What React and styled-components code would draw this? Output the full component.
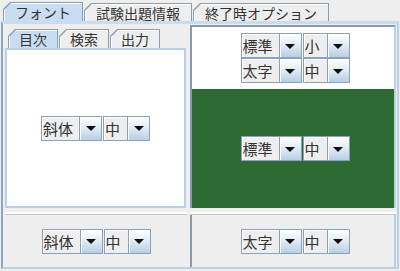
import styled, { createGlobalStyle } from "styled-components";

const GlobalStyle = createGlobalStyle`
  html, body {
    margin: 0;
    padding: 0;
    background: #eeeeee;
  }
  body {
    font-family: "Noto Sans CJK JP", "Noto Sans", sans-serif;
  }
`;

const slant = "polygon(7px 0, 100% 0, 100% 100%, 0 100%, 0 7px)";

const Tab = ({ label, selected, small }) => (
  <StyledTab $small={small} $selected={selected}>
    <StyledTabFace $small={small} $selected={selected}>{label}</StyledTabFace>
  </StyledTab>
);

const Combo = ({ value, wide }) => (
  <StyledCombo>
    <StyledField $wide={wide}>{value}</StyledField>
    <StyledArrowButton>
      <StyledArrow />
    </StyledArrowButton>
  </StyledCombo>
);

const FontPair = ({ style, size }) => (
  <StyledPair>
    <Combo value={style} wide />
    <Combo value={size} />
  </StyledPair>
);

export default function App() {
  return (
    <>
      <GlobalStyle />
      <StyledWindow>
        <StyledTabStrip>
          <Tab label="フォント" selected />
          <Tab label="試験出題情報" />
          <Tab label="終了時オプション" />
        </StyledTabStrip>
        <StyledContent>
          <StyledColumn $width={182}>
            <StyledUpper>
              <StyledInnerTabs>
                <Tab label="目次" selected small />
                <Tab label="検索" small />
                <Tab label="出力" small />
              </StyledInnerTabs>
              <StyledPage>
                <FontPair style="斜体" size="中" />
              </StyledPage>
            </StyledUpper>
            <StyledDivider />
            <StyledLower>
              <FontPair style="斜体" size="中" />
            </StyledLower>
          </StyledColumn>
          <StyledColumn $width={206}>
            <StyledFramed>
              <StyledPreview>
                <StyledStack>
                  <FontPair style="標準" size="小" />
                  <FontPair style="太字" size="中" />
                </StyledStack>
              </StyledPreview>
              <StyledGreen>
                <FontPair style="標準" size="中" />
              </StyledGreen>
            </StyledFramed>
            <StyledDivider />
            <StyledLower $framed>
              <FontPair style="太字" size="中" />
            </StyledLower>
          </StyledColumn>
        </StyledContent>
      </StyledWindow>
    </>
  );
}

const StyledWindow = styled.div`
  width: 400px;
  height: 271px;
  background: #eeeeee;
  display: flex;
  flex-direction: column;
  box-sizing: border-box;
  color: #333333;
`;

const StyledTabStrip = styled.div`
  display: flex;
  align-items: flex-end;
  height: 21px;
  padding-left: 3px;
  flex: none;
`;

const StyledTab = styled.div`
  background: #8a9cb0;
  clip-path: ${slant};
  padding: 1px 1px 0 1px;
  margin-right: 1px;
  height: ${({ $small, $selected }) => ($small ? 19 : $selected ? 19 : 18)}px;
  box-sizing: border-box;
  display: flex;
`;

const StyledTabFace = styled.div`
  clip-path: ${slant};
  background: ${({ $selected }) => ($selected ? "#c8ddf2" : "#eeeeee")};
  box-shadow: inset 1px 1px 0 #ffffff;
  font-size: 14px;
  line-height: 1;
  padding: 0 ${({ $small }) => ($small ? 10 : 11)}px;
  display: flex;
  align-items: center;
  white-space: nowrap;
`;

const StyledContent = styled.div`
  flex: 1;
  display: flex;
  gap: 3px;
  border: 2px solid #b8cfe5;
  border-top: 3px solid #c8ddf2;
  border-left: 2px solid #8fa5bd;
  margin: 0 1px 2px 1px;
  padding: 0 1px 0 2px;
  box-sizing: border-box;
`;

const StyledColumn = styled.div`
  width: ${({ $width }) => $width}px;
  display: flex;
  flex-direction: column;
  flex: none;
`;

const StyledUpper = styled.div`
  flex: 1;
  display: flex;
  flex-direction: column;
  padding-top: 5px;
`;

const StyledInnerTabs = styled.div`
  display: flex;
  align-items: flex-end;
  padding-left: 3px;
  height: 19px;
`;

const StyledPage = styled.div`
  flex: 1;
  background: #ffffff;
  border: 2px solid #b8cfe5;
  margin: 0 1px 0 0;
  display: flex;
  align-items: center;
  justify-content: center;
`;

const StyledFramed = styled.div`
  flex: 1;
  display: flex;
  flex-direction: column;
  margin-top: 1px;
  border-top: 2px solid #8a9aaa;
  border-left: 2px solid #8a9aaa;
  border-right: 2px solid #b8cfe5;
  box-shadow: inset 1px 1px 0 #ffffff;
`;

const StyledPreview = styled.div`
  height: 62px;
  background: #ffffff;
  display: flex;
  align-items: center;
  justify-content: center;
  flex: none;
  padding-left: 4px;
`;

const StyledGreen = styled.div`
  flex: 1;
  background: #2e6a33;
  display: flex;
  align-items: center;
  justify-content: center;
  padding-left: 4px;
`;

const StyledStack = styled.div`
  display: flex;
  flex-direction: column;
`;

const StyledDivider = styled.div`
  height: 6px;
  flex: none;
  border-bottom: 1px solid #c4c9ce;
  box-shadow: inset 0 -2px 0 #ffffff;
`;

const StyledLower = styled.div`
  height: 52px;
  flex: none;
  display: flex;
  align-items: center;
  justify-content: center;
  padding-left: ${({ $framed }) => ($framed ? 4 : 0)}px;
  border-left: ${({ $framed }) => ($framed ? "2px solid #8a9aaa" : "none")};
  border-right: ${({ $framed }) => ($framed ? "2px solid #b8cfe5" : "none")};
`;

const StyledPair = styled.div`
  display: flex;
  gap: 1px;
`;

const StyledCombo = styled.div`
  display: flex;
  height: 25px;
  border: 1px solid #8ba1ba;
  box-sizing: border-box;
  background: #eeeeee;
`;

const StyledField = styled.div`
  width: ${({ $wide }) => ($wide ? 37 : 23)}px;
  font-size: 15px;
  line-height: 1;
  padding-left: 1px;
  box-sizing: border-box;
  display: flex;
  align-items: center;
  box-shadow: inset 1px 1px 0 #ffffff;
  color: #333333;
  white-space: nowrap;
`;

const StyledArrowButton = styled.div`
  width: 21px;
  border-left: 1px solid #8ba1ba;
  background: linear-gradient(#ffffff, #e3ecf5 45%, #b8cfe5);
  box-shadow: inset 1px 1px 0 #ffffff;
  display: flex;
  align-items: center;
  justify-content: center;
`;

const StyledArrow = styled.div`
  width: 0;
  height: 0;
  border-left: 5px solid transparent;
  border-right: 5px solid transparent;
  border-top: 5px solid #111111;
  margin-top: 1px;
`;
